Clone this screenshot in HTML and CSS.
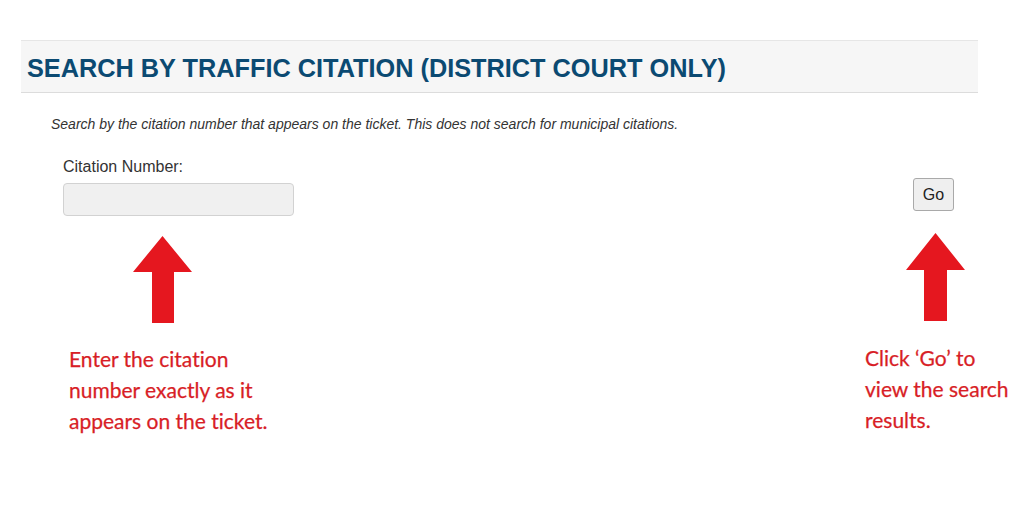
FILE: index.html
```html
<!DOCTYPE html>
<html lang="en">
<head>
<meta charset="utf-8">
<title>Search by Traffic Citation</title>
<link rel="stylesheet" href="styles.css">
</head>
<body>
<div class="page">
  <div class="band">
    <h1 class="title">SEARCH BY TRAFFIC CITATION (DISTRICT COURT ONLY)</h1>
  </div>
  <p class="desc">Search by the citation number that appears on the ticket. This does not search for municipal citations.</p>
  <div class="row">
    <div class="col-left">
      <label class="label" for="cit">Citation Number:</label>
      <input class="input" id="cit" type="text">
      <svg class="arrow arrow-left" width="59" height="87" viewBox="0 0 59 87"><polygon points="29.5,0 59,36 41,36 41,87 19,87 19,36 0,36" fill="#e5171f"/></svg>
      <p class="note note-left">Enter the citation<br>number exactly as it<br>appears on the ticket.</p>
    </div>
    <div class="col-right">
      <button class="go" type="button">Go</button>
      <svg class="arrow arrow-right" width="59" height="88" viewBox="0 0 59 88"><polygon points="29.5,0 59,37 41,37 41,88 18,88 18,37 0,37" fill="#e5171f"/></svg>
      <p class="note note-right">Click ‘Go’ to<br>view the search<br>results.</p>
    </div>
  </div>
</div>
</body>
</html>
```
FILE: styles.css
```css
html, body {
  margin: 0;
  padding: 0;
  background: #ffffff;
}
.page {
  width: 1024px;
  height: 525px;
  padding-top: 40px;
  box-sizing: border-box;
  font-family: "Liberation Sans", Arial, sans-serif;
  overflow: hidden;
}
.band {
  margin-left: 21px;
  width: 957px;
  height: 53px;
  box-sizing: border-box;
  background: #f6f6f6;
  border-top: 1px solid #e6e6e6;
  border-bottom: 1px solid #dcdcdc;
  display: flex;
  align-items: center;
  padding-left: 6px;
  padding-top: 3px;
}
.title {
  margin: 0;
  font-size: 25.3px;
  font-weight: bold;
  color: #0b4a72;
}
.desc {
  margin: 23px 0 0 51px;
  font-size: 14px;
  line-height: 17px;
  font-style: italic;
  color: #333;
}
.row {
  display: flex;
  justify-content: space-between;
  margin-top: 25px;
}
.col-left {
  margin-left: 63px;
  display: flex;
  flex-direction: column;
  align-items: flex-start;
}
.label {
  font-size: 16px;
  line-height: 18px;
  color: #333;
}
.input {
  margin-top: 7px;
  width: 231px;
  height: 33px;
  box-sizing: border-box;
  background: #f0f0f0;
  border: 1px solid #d2d2d2;
  border-radius: 4px;
}
.arrow-left {
  margin: 20px 0 0 70px;
  display: block;
}
.note {
  margin: 0;
  font-family: Lato, "Open Sans", sans-serif;
  font-variant-ligatures: none;
  font-size: 21px;
  line-height: 31px;
  color: #d81e26;
  -webkit-text-stroke: 0.25px #d81e26;
}
.note-left {
  margin: 20px 0 0 6px;
}
.col-right {
  width: 159px;
  display: flex;
  flex-direction: column;
  align-items: flex-start;
}
.go {
  margin: 20px 0 0 48px;
  width: 41px;
  height: 33px;
  box-sizing: border-box;
  background: #efefef;
  border: 1px solid #a9a9a9;
  border-radius: 3px;
  font-family: "Liberation Sans", Arial, sans-serif;
  font-size: 16px;
  color: #222;
  padding: 0;
}
.arrow-right {
  margin: 22px 0 0 41px;
  display: block;
}
.note-right {
  margin: 21px 0 0 0;
}
```
